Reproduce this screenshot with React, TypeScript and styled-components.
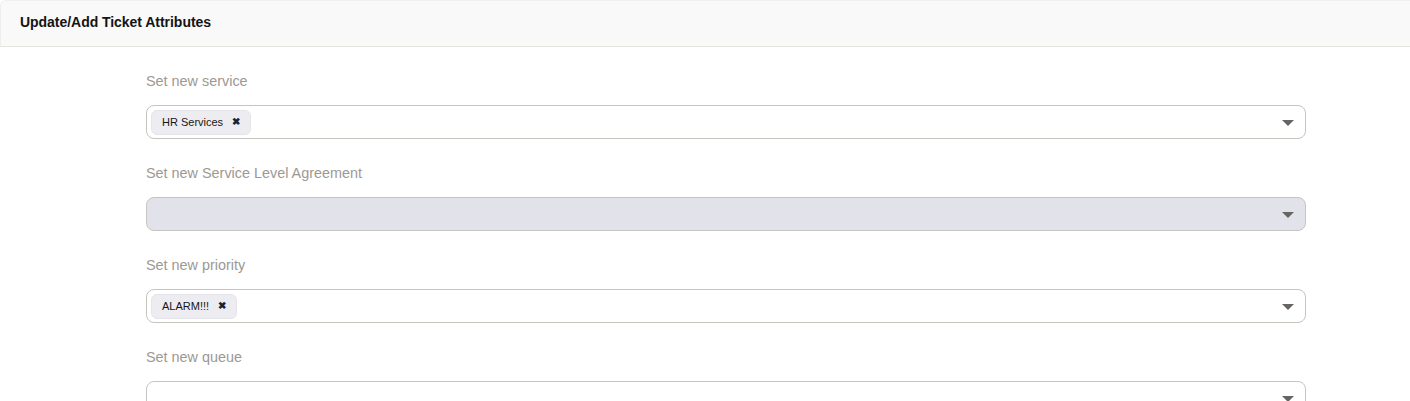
import React from "react";
import styled, { createGlobalStyle } from "styled-components";

const Global = createGlobalStyle`
  html, body { margin: 0; padding: 0; background: #fff; }
  body { font-family: "Liberation Sans", Arial, sans-serif; }
`;

const Card = styled.div`
  width: 1410px;
`;

const Header = styled.div`
  background: #f9f9f9;
  border-bottom: 1px solid #e6e4df;
  border-left: 1px solid #efeeeb;
  border-top: 1px solid #f1f0ed;
  border-top-left-radius: 6px;
  display: flex;
  align-items: center;
  padding-left: 19px;
  box-sizing: border-box;
  height: 47px;
`;

const Title = styled.h2`
  margin: 0;
  font-size: 14px;
  font-weight: 700;
  color: #141414;
  letter-spacing: -0.04px;
  margin-top: -3px;
  white-space: pre;
`;

const Body = styled.div`
  padding: 24px 0 0 146px;
`;

const Form = styled.div`
  width: 1160px;
  display: flex;
  flex-direction: column;
`;

const Field = styled.div`
  display: flex;
  flex-direction: column;
  gap: 14px;
  margin-bottom: 24px;
`;

const Label = styled.label`
  font-size: 14.4px;
  line-height: 20px;
  color: #9d9893;
`;

const Select = styled.div<{ $disabled?: boolean }>`
  height: 34px;
  box-sizing: border-box;
  border: 1px solid #c6c4bf;
  border-radius: 8px;
  background: ${(p) => (p.$disabled ? "#e2e2ea" : "#fff")};
  display: flex;
  align-items: center;
  padding: 0 11px 0 4px;
`;

const Tags = styled.div`
  flex: 1;
  display: flex;
  gap: 4px;
`;

const Tag = styled.span`
  height: 25px;
  box-sizing: border-box;
  display: inline-flex;
  align-items: center;
  gap: 9px;
  padding: 0 10px 0 10px;
  background: #ededf1;
  border: 1px solid #e4e4ea;
  border-radius: 6px;
  font-size: 11px;
  color: #161616;
`;

const Remove = styled.span`
  font-size: 10px;
  font-weight: 700;
  color: #222;
  line-height: 1;
`;

const Caret = styled.span`
  width: 0;
  height: 0;
  border-left: 6px solid transparent;
  border-right: 6px solid transparent;
  border-top: 6px solid #676462;
  margin-top: 1px;
`;

type F = { label: string; tags?: string[]; disabled?: boolean };

const fields: F[] = [
  { label: "Set new service", tags: ["HR Services"] },
  { label: "Set new Service Level Agreement", disabled: true },
  { label: "Set new priority", tags: ["ALARM!!!"] },
  { label: "Set new queue" },
];

export default function App() {
  return (
    <>
      <Global />
      <Card>
        <Header>
          <Title>Update/Add Ticket Attributes</Title>
        </Header>
        <Body>
          <Form>
            {fields.map((f) => (
              <Field key={f.label}>
                <Label>{f.label}</Label>
                <Select $disabled={f.disabled}>
                  <Tags>
                    {(f.tags || []).map((t) => (
                      <Tag key={t}>
                        {t}
                        <Remove>✖</Remove>
                      </Tag>
                    ))}
                  </Tags>
                  <Caret />
                </Select>
              </Field>
            ))}
          </Form>
        </Body>
      </Card>
    </>
  );
}
